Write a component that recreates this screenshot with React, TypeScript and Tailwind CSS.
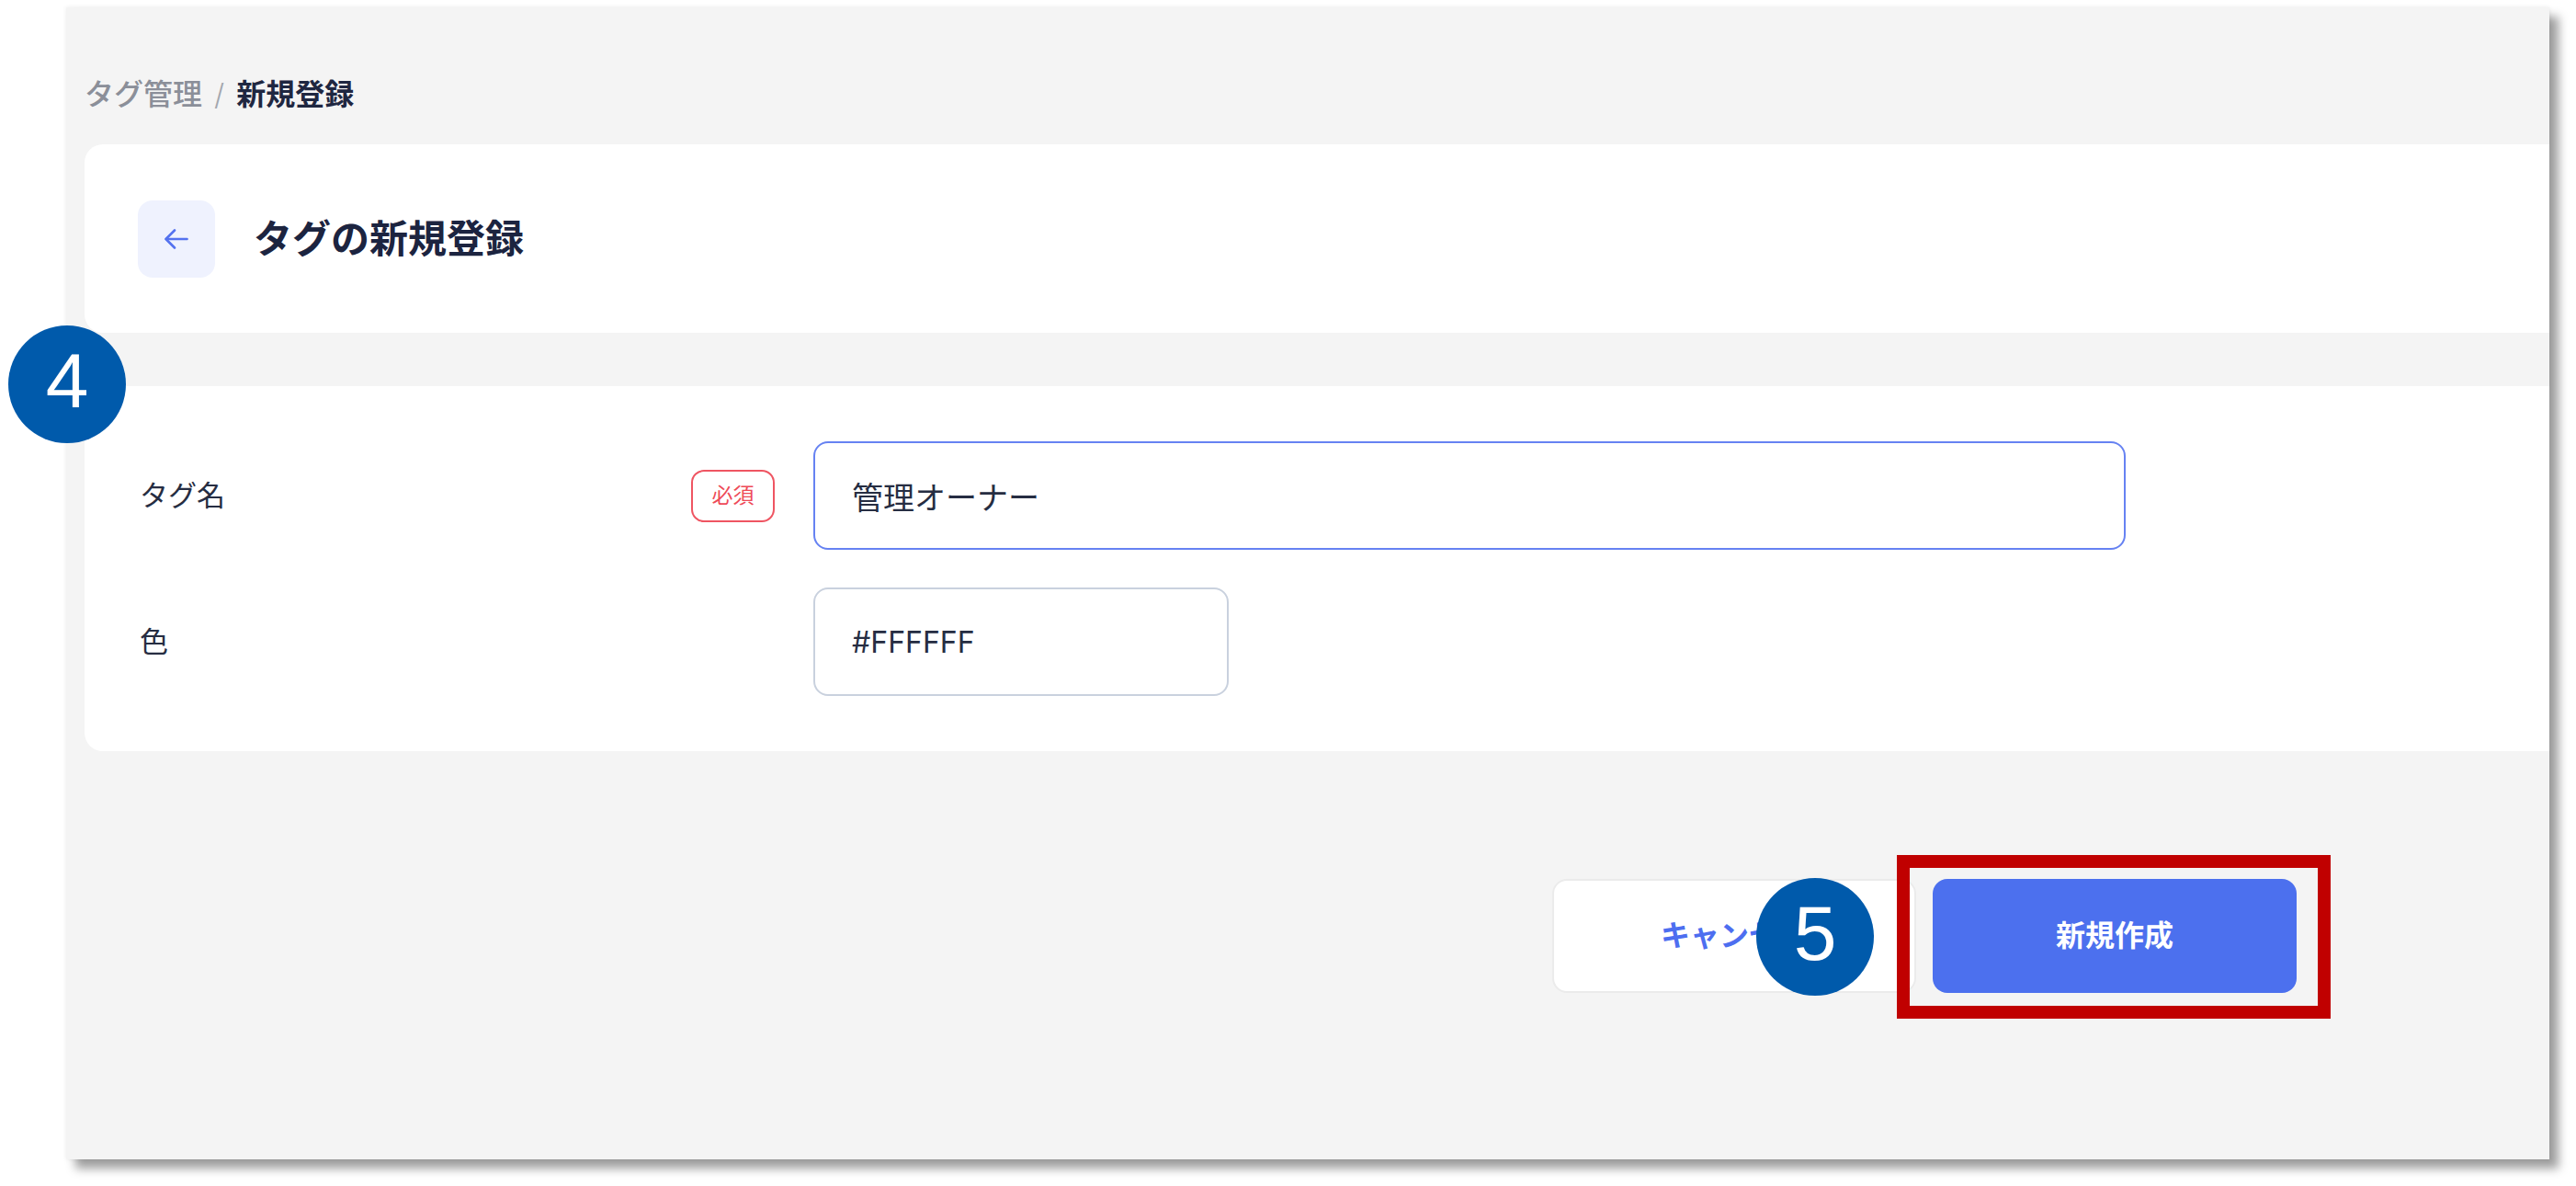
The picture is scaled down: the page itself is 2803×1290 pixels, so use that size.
import React from 'react';

const font = { fontFamily: 'Inter, "Noto Sans CJK JP", sans-serif' };

type FieldRowProps = {
  label: string;
  required?: boolean;
  value: string;
  width: string;
  size: string;
  focused?: boolean;
};

const FieldRow = ({ label, required, value, width, size, focused }: FieldRowProps) => (
  <div className="flex h-[118px] items-center">
    <div className="w-[600px] text-[31px] text-[#262d42]">{label}</div>
    <div className="w-[91px]">
      {required && (
        <div className="flex h-[57px] w-[91px] items-center justify-center rounded-[14px] border-2 border-[#ef5562] text-[23px] text-[#ee4a58]">
          必須
        </div>
      )}
    </div>
    <input
      readOnly
      value={value}
      className={`ml-[42px] h-[118px] ${width} ${size} rounded-[16px] border-2 bg-white pl-[40px] text-[#262d42] outline-none ${
        focused ? 'border-[#6682f2]' : 'border-[#c9d1de]'
      }`}
    />
  </div>
);

const Marker = ({ n, className }: { n: number; className: string }) => (
  <div
    className={`absolute flex h-[128px] w-[128px] items-center justify-center rounded-full bg-[#005aab] pb-[8px] text-[84px] leading-none text-white ${className}`}
    style={{ fontFamily: '"Liberation Sans", Arial, sans-serif' }}
  >
    {n}
  </div>
);

export default function App() {
  return (
    <div className="relative h-[1290px] w-[2803px] overflow-hidden bg-white pl-[72px] pt-[8px]" style={font}>
      <div className="flex h-[1253px] w-[2702px] flex-col bg-[#f4f4f4] pl-[20px] shadow-[10px_10px_10px_rgba(0,0,0,0.38),0_0_5px_rgba(0,0,0,0.08)]">
        {/* パンくず */}
        <div className="flex items-center gap-[13px] pb-[32px] pt-[73px] text-[32px] leading-[44px]">
          <span className="font-medium text-[#8b8f99]">タグ管理</span>
          <span className="font-light text-[#a3a7ae]">/</span>
          <span className="font-semibold text-[#1f2741]">新規登録</span>
        </div>

        {/* ヘッダー */}
        <div className="flex h-[205px] items-center gap-[42px] rounded-l-[20px] bg-white pl-[58px]">
          <button className="flex h-[84px] w-[84px] items-center justify-center rounded-[16px] bg-[#eff2fe]">
            <svg width="26" height="22" viewBox="0 0 26 22" fill="none" stroke="#5472ef" strokeWidth="2.6" strokeLinecap="round" strokeLinejoin="round">
              <path d="M24.5 11H2" />
              <path d="M11 1.5 1.5 11l9.5 9.5" />
            </svg>
          </button>
          <h1 className="text-[42px] font-bold text-[#1c2440]">タグの新規登録</h1>
        </div>

        {/* フォーム */}
        <div className="mt-[58px] flex flex-col gap-[41px] rounded-l-[20px] bg-white py-[60px] pl-[60px]">
          <FieldRow label="タグ名" required value="管理オーナー" width="w-[1428px]" size="text-[34px]" focused />
          <FieldRow label="色" value="#FFFFFF" width="w-[452px]" size="text-[32px]" />
        </div>

        {/* ボタン */}
        <div className="mt-[139px] flex justify-end gap-[18px] pr-[275px]">
          <button className="h-[124px] w-[396px] rounded-[16px] border-2 border-[#ebebeb] bg-white text-[32px] font-semibold text-[#4d6ef0]">
            キャンセル
          </button>
          <button className="h-[124px] w-[396px] rounded-[16px] bg-[#4c70ee] text-[32px] font-semibold text-white">
            新規作成
          </button>
        </div>
      </div>

      {/* 注釈 */}
      <Marker n={4} className="left-[9px] top-[354px]" />
      <Marker n={5} className="left-[1911px] top-[955px]" />
      <div className="absolute left-[2064px] top-[930px] h-[178px] w-[472px] border-[14px] border-[#c00000]" />
    </div>
  );
}
